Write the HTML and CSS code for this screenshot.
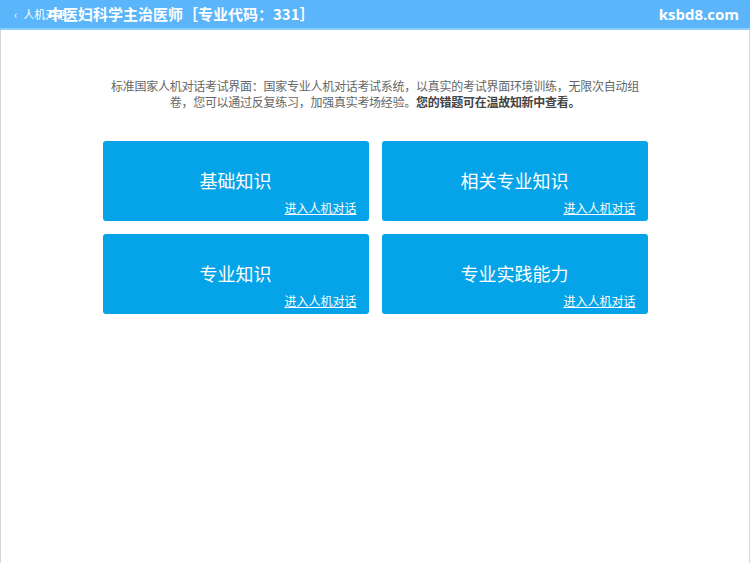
FILE: index.html
```html
<!DOCTYPE html>
<html lang="zh-CN">
<head>
<meta charset="utf-8">
<title>中医妇科学主治医师</title>
<link rel="stylesheet" href="styles.css">
</head>
<body>
<header class="topbar">
  <a class="back"><span class="chev">‹</span>人机对话</a>
  <h1 class="title">中医妇科学主治医师［专业代码：331］</h1>
  <span class="site">ksbd8.com</span>
</header>
<main class="page">
  <div class="wrap">
    <p class="intro">标准国家人机对话考试界面：国家专业人机对话考试系统，以真实的考试界面环境训练，无限次自动组卷，您可以通过反复练习，加强真实考场经验。<b>您的错题可在温故知新中查看。</b></p>
    <div class="grid">
      <div class="card"><div class="card-title">基础知识</div><a class="card-link">进入人机对话</a></div>
      <div class="card"><div class="card-title">相关专业知识</div><a class="card-link">进入人机对话</a></div>
      <div class="card"><div class="card-title">专业知识</div><a class="card-link">进入人机对话</a></div>
      <div class="card"><div class="card-title">专业实践能力</div><a class="card-link">进入人机对话</a></div>
    </div>
  </div>
</main>
</body>
</html>
```
FILE: styles.css
```css
html, body {
  margin: 0;
  padding: 0;
  height: 100%;
}
body {
  font-family: "Noto Sans CJK SC", "Noto Sans", sans-serif;
  background: #fff;
  display: flex;
  flex-direction: column;
}
.topbar {
  position: relative;
  height: 28px;
  background: #5ab5fb;
  border-bottom: 2px solid #8ccdfb;
  display: flex;
  align-items: center;
  color: #fff;
  flex: none;
}
.back {
  position: absolute;
  left: 14px;
  top: 6px;
  font-size: 11px;
  line-height: 16px;
  color: #fff;
}
.chev {
  margin-right: 6px;
}
.title {
  position: relative;
  margin: 0 0 0 48px;
  font-size: 15px;
  font-weight: bold;
  line-height: 28px;
}
.site {
  margin-left: auto;
  margin-right: 11px;
  font-family: "Open Sans", "Noto Sans", sans-serif;
  font-size: 15px;
  font-weight: bold;
  line-height: 28px;
}
.page {
  flex: 1;
  border-left: 1px solid #d6d6d6;
  border-right: 1px solid #d6d6d6;
}
.wrap {
  width: 545px;
  margin: 0 auto;
  padding-top: 48px;
}
.intro {
  margin: 0 0 31px;
  font-size: 12px;
  line-height: 16px;
  letter-spacing: -0.27px;
  color: #666;
  text-align: center;
}
.intro b {
  color: #444;
}
.grid {
  display: grid;
  grid-template-columns: 266px 266px;
  gap: 13px;
}
.card {
  position: relative;
  height: 80px;
  background: #05a3e8;
  border-radius: 3px;
  color: #fff;
}
.card-title {
  text-align: center;
  font-size: 18px;
  line-height: 24px;
  padding-top: 27px;
}
.card-link {
  position: absolute;
  right: 12px;
  bottom: 5px;
  font-size: 12px;
  line-height: 16px;
  text-decoration: underline;
  color: #fff;
}
```
